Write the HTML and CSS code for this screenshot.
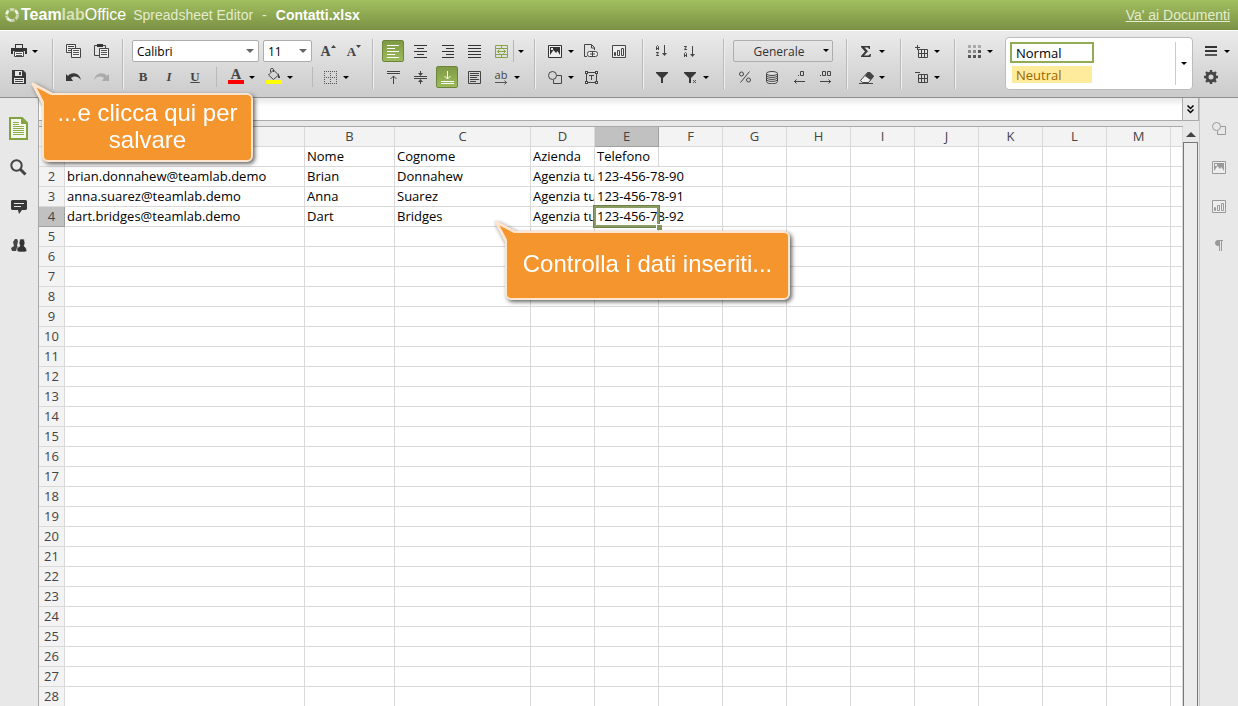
FILE: index.html
```html
<!DOCTYPE html>
<html lang="it">
<head>
    <meta charset="UTF-8">
    <meta name="viewport" content="width=device-width, initial-scale=1.0">
    <title>Contatti.xlsx - Spreadsheet Editor</title>
    <link rel="stylesheet" href="styles.css">
</head>

<body>
    <header class="header">
        <svg class="logo" width="16" height="16" viewBox="0 0 16 16"><circle cx="8" cy="8" r="5.5" fill="none" stroke="#fff" stroke-width="3" stroke-dasharray="4.6 1.16" opacity=".55"/><path d="M3.6 11.6A5.6 5.6 0 0 0 7 13.5M11 3.3a5.5 5.5 0 0 1 2.4 3.6M2.5 7A5.6 5.6 0 0 1 4 4" fill="none" stroke="#fff" stroke-width="2.4" opacity=".7"/></svg>
        <span class="brand"><b>Team</b><b class="lab">lab</b>Office</span>
        <span class="app">Spreadsheet Editor</span>
        <span class="dash">-</span>
        <h1 class="doc">Contatti.xlsx</h1>
        <a class="back" href="#">Va' ai Documenti</a>
    </header>

    <div class="toolbar">
        <div class="group g-file">
            <div class="row">
                <button class="tool" aria-label="Stampa"><svg width="16" height="14" viewBox="0 0 16 14"><path d="M4 0h8v1H4zM4 1h1v3H4zM11 1h1v3h-1zM0 4h16v6h-2V7H2v3H0z" fill="#333"/><path d="M3.500 7.500h9v5h-9z" fill="#f4f4f4" stroke="#444"/><path d="M5 9h6v1H5zM5 11h6v1H5z" fill="#555"/></svg></button>
                <button class="caret" aria-label="Opzioni di stampa"></button>
            </div>
            <div class="row">
                <button class="tool" aria-label="Salva"><svg width="14" height="14" viewBox="0 0 14 14"><path d="M0 0h11l3 3v11H0z" fill="#383838"/><path d="M3 1h7v5H3zM2 8h10v5H2z" fill="#e8e8e8"/><path d="M7 2h2v3H7zM3 9h8v1H3zM3 11h8v1H3z" fill="#444"/></svg></button>
            </div>
        </div>
        <div class="group g-clip">
            <div class="row">
                <button class="tool" aria-label="Copia"><svg width="15" height="14" viewBox="0 0 15 14"><path d="M.5.5h9v8h-9z" fill="#eee" stroke="#444"/><path d="M2 2h6v1H2zM2 4h3v1H2zM2 6h3v1H2z" fill="#444"/><path d="M5.500 4.500h9v9h-9z" fill="#eee" stroke="#444"/><path d="M7 6h6v1H7zM7 8h6v1H7zM7 10h6v1H7z" fill="#555"/></svg></button>
                <button class="tool" aria-label="Incolla"><svg width="15" height="14" viewBox="0 0 15 14"><path d="M.5 1.500h11v10H.5z" fill="#e4e4e4" stroke="#444"/><path d="M3 0h6v3H3z" fill="#333"/><path d="M5.500 4.500h9v9h-9z" fill="#eee" stroke="#444"/><path d="M7 6h6v1H7zM7 8h6v1H7zM7 10h6v1H7z" fill="#555"/></svg></button>
            </div>
            <div class="row">
                <button class="tool" aria-label="Annulla"><svg width="15" height="9" viewBox="0 0 15 9"><path d="M0 1l2 2C5-1 13-1 15 7 12 3 8 2.500 5 5l2 3H0z" fill="#383838"/></svg></button>
                <button class="tool" aria-label="Ripeti" disabled><svg width="15" height="9" viewBox="0 0 15 9"><path d="M15 1l-2 2C10-1 2-1 0 7 3 3 7 2.500 10 5L8 8h7z" fill="#aaa"/></svg></button>
            </div>
        </div>
        <div class="group g-font">
            <div class="row">
                <span class="combo combo-font"><select aria-label="Carattere"><option>Calibri</option></select></span>
                <span class="combo combo-size"><select aria-label="Dimensione carattere"><option>11</option></select></span>
                <button class="tool letter grow" aria-label="Aumenta dimensione">A<svg width="5" height="3" viewBox="0 0 5 3"><path d="M0 3h5L2.500 0z" fill="#444"/></svg></button>
                <button class="tool letter shrink" aria-label="Riduci dimensione">A<svg width="5" height="3" viewBox="0 0 5 3"><path d="M0 0h5L2.500 3z" fill="#444"/></svg></button>
            </div>
            <div class="row letters">
                <button class="tool letter">B</button>
                <button class="tool letter italic">I</button>
                <button class="tool letter under">U</button>
                <span class="split"></span>
                <button class="tool letter color" aria-label="Colore carattere">A<i class="bar red"></i></button>
                <button class="caret" aria-label="Altri colori"></button>
                <button class="tool color fill" aria-label="Colore sfondo"><svg width="14" height="12" viewBox="0 0 14 12"><path d="M3.500 4V1.500Q3.500.5 5 .5t1.500 1V4M1.500 7l5-5 5 5-5 4.500z" fill="none" stroke="#444"/><path d="M11 5l2 4v1h-2z" fill="#444"/></svg><i class="bar yellow"></i></button>
                <button class="caret" aria-label="Altri colori di sfondo"></button>
                <span class="split wide"></span>
                <button class="tool" aria-label="Bordi"><svg width="13" height="13" viewBox="0 0 13 13"><path d="M0 .5h13M0 6.500h13M0 12.500h13M.5 0v13M6.500 0v13M12.500 0v13" stroke="#555" stroke-dasharray="1 1"/></svg></button>
                <button class="caret" aria-label="Altri bordi"></button>
            </div>
        </div>
        <div class="group g-align">
            <div class="row">
                <button class="tool active" aria-label="Allinea a sinistra"><svg width="13" height="13" viewBox="0 0 13 13"><path d="M0 .5h12M0 3.500h8M0 6.500h12M0 9.500h8M0 12.500h12" stroke="#fff"/></svg></button>
                <button class="tool" aria-label="Allinea al centro"><svg width="13" height="13" viewBox="0 0 13 13"><path d="M0 .5h13M3 3.500h7M0 6.500h13M3 9.500h7M0 12.500h13" stroke="#333"/></svg></button>
                <button class="tool" aria-label="Allinea a destra"><svg width="13" height="13" viewBox="0 0 13 13"><path d="M1 .5h12M5 3.500h8M1 6.500h12M5 9.500h8M1 12.500h12" stroke="#333"/></svg></button>
                <button class="tool" aria-label="Giustifica"><svg width="13" height="13" viewBox="0 0 13 13"><path d="M0 .5h13M0 3.500h13M0 6.500h13M0 9.500h13M0 12.500h13" stroke="#333"/></svg></button>
                <button class="tool" aria-label="Unisci celle"><svg width="13" height="13" viewBox="0 0 13 13"><path d="M.5.5h12v12H.5zM0 3.500h13M0 9.500h13M6.500 0v3M6.500 10v3M2 6.500h9M4.500 4.500l-2 2 2 2M8.500 4.500l2 2-2 2" fill="none" stroke="#86a740"/></svg></button>
                <button class="caret ruled" aria-label="Opzioni unione"></button>
            </div>
            <div class="row">
                <button class="tool" aria-label="Allinea in alto"><svg width="13" height="13" viewBox="0 0 13 13"><path d="M0 .5h13M0 2.500h13M6.500 5v8M3.500 8l3-3 3 3" fill="none" stroke="#444"/></svg></button>
                <button class="tool" aria-label="Allinea in mezzo"><svg width="13" height="13" viewBox="0 0 13 13"><path d="M0 5.500h13M0 7.500h13M6.500 0v4M6.500 9v4" stroke="#444"/><path d="M4 2h5L6.500 5zM4 11h5L6.500 8z" fill="#444"/></svg></button>
                <button class="tool active" aria-label="Allinea in basso"><svg width="13" height="13" viewBox="0 0 13 13"><path d="M0 10.500h13M0 12.500h13M6.500 0v8M3.500 5l3 3 3-3" fill="none" stroke="#fff"/></svg></button>
                <button class="tool" aria-label="Testo a capo"><svg width="13" height="13" viewBox="0 0 13 13"><path d="M.5.5h12v12H.5zM2 2.500h9M2 4.500h9M2 6.500h7M2 8.500h9M2 10.500h6" fill="none" stroke="#444"/></svg></button>
                <button class="tool orient" aria-label="Orientamento">ab<svg width="13" height="5" viewBox="0 0 13 5"><path d="M0 2.500h12M9.500.5l2 2-2 2" fill="none" stroke="#555"/></svg></button>
                <button class="caret" aria-label="Altri orientamenti"></button>
            </div>
        </div>
        <div class="group g-insert">
            <div class="row">
                <button class="tool" aria-label="Immagine"><svg width="14" height="13" viewBox="0 0 14 13"><path d="M.5.5h13v12H.5z" fill="#eee" stroke="#333"/><path d="M2 2h10v8L9.500 6 8 8 5.500 5 2 10z" fill="#333"/><path d="M3 3h2v2H3z" fill="#eee"/></svg></button>
                <button class="caret" aria-label="Origine immagine"></button>
                <button class="tool" aria-label="Collegamento"><svg width="15" height="14" viewBox="0 0 15 14"><path d="M3 12.500H.5V.5h7l3 3V6M7.500 1v3h3" fill="none" stroke="#444"/><rect x="3.500" y="7.500" width="10" height="5" rx="2" fill="#eee" stroke="#444"/><path d="M6 10h5M8.500 7v6" stroke="#444"/></svg></button>
                <button class="tool" aria-label="Grafico"><svg width="14" height="13" viewBox="0 0 14 13"><path d="M.5.5h13v12H.5z" fill="#eee" stroke="#444"/><path d="M2.500 7.500h1v3h-1zM5.500 5.500h2v5h-2zM9.500 3.500h2v7h-2z" fill="none" stroke="#444"/></svg></button>
            </div>
            <div class="row">
                <button class="tool" aria-label="Forma"><svg width="14" height="13" viewBox="0 0 14 13"><path d="M9 4.500h4.500v8h-8V9" fill="none" stroke="#444"/><circle cx="4.500" cy="4.500" r="4" fill="none" stroke="#444"/></svg></button>
                <button class="caret" aria-label="Altre forme"></button>
                <button class="tool" aria-label="Casella di testo"><svg width="13" height="13" viewBox="0 0 13 13"><path d="M1.500 1.500h10v10h-10zM4 4.500h5M6.500 4v5" fill="none" stroke="#444"/><path d="M0 0h3v3H0zM10 0h3v3h-3zM0 10h3v3H0zM10 10h3v3h-3z" fill="#444"/><path d="M1 1h1v1H1zM11 1h1v1h-1zM1 11h1v1H1zM11 11h1v1h-1z" fill="#eee"/></svg></button>
            </div>
        </div>
        <div class="group g-sort">
            <div class="row">
                <button class="tool" aria-label="Ordina crescente"><svg width="12" height="12" viewBox="0 0 12 12"><path d="M.5 5V1.500L1.500.5l1 1V5M1 3.500h1M0 7.500h2.500L.5 10.500H3" fill="none" stroke="#444"/><path d="M8.500 0v10" stroke="#444"/><path d="M6 8h5l-2.500 3z" fill="#444"/></svg></button>
                <button class="tool" aria-label="Ordina decrescente"><svg width="12" height="12" viewBox="0 0 12 12"><path d="M0 1.500h2.500L.5 4.500H3M.5 12V8.500l1-1 1 1V12M1 10.500h1" fill="none" stroke="#444"/><path d="M8.500 1v10" stroke="#444"/><path d="M6 9h5l-2.500 3z" fill="#444"/></svg></button>
            </div>
            <div class="row">
                <button class="tool" aria-label="Filtro"><svg width="12" height="11" viewBox="0 0 12 11"><path d="M0 0h12v1L7 6v5H5V6L0 1z" fill="#383838"/></svg></button>
                <button class="tool" aria-label="Cancella filtro"><svg width="12" height="11" viewBox="0 0 12 11"><path d="M0 0h12v1L7 6v5H5V6L0 1z" fill="#383838"/><path d="M9 8l3 3M12 8l-3 3" stroke="#555"/></svg></button>
                <button class="caret" aria-label="Opzioni filtro"></button>
            </div>
        </div>
        <div class="group g-number">
            <div class="row">
                <span class="combo combo-format"><select aria-label="Formato numero"><option>Generale</option></select></span>
            </div>
            <div class="row">
                <button class="tool" aria-label="Percentuale"><svg width="12" height="12" viewBox="0 0 12 12"><path d="M10.500.5l-9 11" stroke="#444"/><circle cx="2.500" cy="3" r="2" fill="none" stroke="#444"/><circle cx="9.500" cy="9" r="2" fill="none" stroke="#444"/></svg></button>
                <button class="tool" aria-label="Valuta"><svg width="12" height="13" viewBox="0 0 12 13"><path d="M.5 2.500v8c0 3 11 3 11 0v-8" fill="#ddd" stroke="#444"/><ellipse cx="6" cy="2.500" rx="5.500" ry="2" fill="#ddd" stroke="#444"/><path d="M.5 4.500c0 2.500 11 2.500 11 0M.5 6.500c0 2.500 11 2.500 11 0M.5 8.500c0 2.500 11 2.500 11 0" fill="none" stroke="#444"/></svg></button>
                <button class="tool" aria-label="Diminuisci decimali"><svg width="12" height="14" viewBox="0 0 12 14"><path d="M7.500 1.500h3v4h-3zM5 5.500h1M1 11.500h11M3.500 9.500l-2 2 2 2" fill="none" stroke="#444"/></svg></button>
                <button class="tool" aria-label="Aumenta decimali"><svg width="12" height="14" viewBox="0 0 12 14"><path d="M2.500 1.500h3v4h-3zM7.500 1.500h3v4h-3zM0 5.500h1M0 11.500h11M8.500 9.500l2 2-2 2" fill="none" stroke="#444"/></svg></button>
            </div>
        </div>
        <div class="group g-edit">
            <div class="row">
                <button class="tool" aria-label="Somma"><svg width="10" height="11" viewBox="0 0 10 11"><path d="M0 0h9v3H8L7 1.500H3.500L7 5.200 3 9.500h4.500L9 8h1l-.5 3H0v-1l4-4.500L0 1z" fill="#383838"/></svg></button>
                <button class="caret" aria-label="Altre funzioni"></button>
            </div>
            <div class="row">
                <button class="tool" aria-label="Cancella"><svg width="15" height="13" viewBox="0 0 15 13"><path d="M1.500 9.500l7-8h2l4 4-5 6h-6z" fill="#eee" stroke="#444"/><path d="M6 5l3-4h2l4 4-3.500 4z" fill="#444"/><path d="M0 12.500h14" stroke="#444"/></svg></button>
                <button class="caret" aria-label="Opzioni cancella"></button>
            </div>
        </div>
        <div class="group g-cells">
            <div class="row">
                <button class="tool" aria-label="Inserisci celle"><svg width="13" height="13" viewBox="0 0 13 13"><path d="M3.500 4.500h9v8h-9zM3 8.500h10M6.500 4v9M9.500 4v9M0 2.500h5M2.500 0v5" fill="none" stroke="#444"/></svg></button>
                <button class="caret" aria-label="Opzioni inserimento"></button>
            </div>
            <div class="row">
                <button class="tool" aria-label="Elimina celle"><svg width="13" height="13" viewBox="0 0 13 13"><path d="M3.500 3.500h9v8h-9zM3 7.500h10M6.500 3v9M9.500 3v9M0 1.500h5" fill="none" stroke="#444"/></svg></button>
                <button class="caret" aria-label="Opzioni eliminazione"></button>
            </div>
        </div>
        <div class="group g-table">
            <div class="row">
                <button class="tool" aria-label="Modello tabella"><svg width="13" height="13" viewBox="0 0 13 13"><path d="M0 0h3v3H0zM5 0h3v3H5zM10 0h3v3h-3z" fill="#aaa"/><path d="M0 5h3v3H0zM5 5h3v3H5z" fill="#888"/><path d="M10 5h3v3h-3zM0 10h3v3H0zM5 10h3v3H5zM10 10h3v3h-3z" fill="#555"/></svg></button>
                <button class="caret" aria-label="Altri modelli"></button>
            </div>
        </div>
        <div class="styles">
            <div class="style-list">
                <button class="style normal">Normal</button>
                <button class="style neutral">Neutral</button>
            </div>
            <button class="caret more" aria-label="Altri stili"></button>
        </div>
        <div class="group g-view">
            <div class="row">
                <button class="tool" aria-label="Visualizza"><svg width="12" height="11" viewBox="0 0 12 11"><path d="M0 0h12v2H0zM0 4h12v2H0z" fill="#333"/><path d="M0 8h12v2H0z" fill="#555"/></svg></button>
                <button class="caret" aria-label="Opzioni visualizzazione"></button>
            </div>
            <div class="row">
                <button class="tool" aria-label="Impostazioni"><svg width="14" height="14" viewBox="0 0 14 14"><circle cx="7" cy="7" r="4" fill="none" stroke="#444" stroke-width="3"/><path d="M7 0v3M7 11v3M0 7h3M11 7h3M2 2l2 2M10 10l2 2M12 2l-2 2M4 10l-2 2" stroke="#444" stroke-width="2.400"/></svg></button>
            </div>
        </div>
    </div>

    <div class="main">
        <nav class="side left">
            <button aria-label="File"><svg width="19" height="23" viewBox="0 0 19 23"><path d="M1 1h12l5 5v16H1z" fill="#f6f8f0" stroke="#82a33f" stroke-width="2"/><path d="M12 1v6h6z" fill="#82a33f"/><path d="M4 5.500h6M4 7.500h6M4 9.500h11M4 11.500h11M4 13.500h11M4 15.500h11M4 17.500h11" stroke="#8faf4d"/></svg></button>
            <button aria-label="Cerca"><svg width="17" height="17" viewBox="0 0 17 17"><circle cx="6.500" cy="6.500" r="5.200" fill="none" stroke="#444" stroke-width="2"/><path d="M10 10l5.500 5.500" stroke="#444" stroke-width="3"/></svg></button>
            <button aria-label="Commenti"><svg width="16" height="14" viewBox="0 0 16 14"><path d="M1 0h14l1 1v8l-1 1h-4l-3 4-1-4H1L0 9V1z" fill="#383838"/><path d="M3 3.500h10M3 6.500h7" stroke="#e8e8e8"/></svg></button>
            <button aria-label="Chat"><svg width="16" height="13" viewBox="0 0 16 13"><path d="M1 12L0 9l3-2-1-4 2-3h2l1 2-1 5 1 1-2 4z" fill="#444"/><path d="M6 12V9l3-2-1-3 1-4h4l1 4-1 3 2 2 1 3-2 1H8z" fill="#333" stroke="#e8e8e8" stroke-width=".6"/></svg></button>
        </nav>
        <main class="sheet">
            <div class="formula">
                <input type="text" aria-label="Barra della formula">
                <button class="expand" aria-label="Espandi"><svg width="7" height="9" viewBox="0 0 7 9"><path d="M.5.500l3 3 3-3M.5 4.500l3 3 3-3" fill="none" stroke="#000" stroke-width="1.500"/></svg></button>
            </div>
            <div class="grid-wrap">
                <div class="grid">
                    <table>
                        <colgroup><col class="c-num"><col class="c-a"><col class="c-b"><col class="c-c"><col class="c" span="10"><col></colgroup>
                        <thead>
                            <tr><th></th><th></th><th>B</th><th>C</th><th>D</th><th class="on">E</th><th>F</th><th>G</th><th>H</th><th>I</th><th>J</th><th>K</th><th>L</th><th>M</th><th></th></tr>
                        </thead>
                        <tbody id="rows">
                            <tr><th></th><td></td><td>Nome</td><td>Cognome</td><td>Azienda</td><td>Telefono</td><td></td><td></td><td></td><td></td><td></td><td></td><td></td><td></td><td></td></tr>
                            <tr><th>2</th><td>brian.donnahew@teamlab.demo</td><td>Brian</td><td>Donnahew</td><td class="cut">Agenzia tu</td><td class="spill">123-456-78-90</td><td></td><td></td><td></td><td></td><td></td><td></td><td></td><td></td><td></td></tr>
                            <tr><th>3</th><td>anna.suarez@teamlab.demo</td><td>Anna</td><td>Suarez</td><td class="cut">Agenzia tu</td><td class="spill">123-456-78-91</td><td></td><td></td><td></td><td></td><td></td><td></td><td></td><td></td><td></td></tr>
                            <tr><th class="on">4</th><td>dart.bridges@teamlab.demo</td><td>Dart</td><td>Bridges</td><td class="cut">Agenzia tu</td><td class="spill selected">123-456-78-92</td><td></td><td></td><td></td><td></td><td></td><td></td><td></td><td></td><td></td></tr>
                        </tbody>
                    </table>
                </div>
                <div class="scroll">
                    <button class="up" aria-label="Scorri su"></button>
                    <div class="thumb"></div>
                </div>
            </div>
        </main>
        <nav class="side right">
            <button aria-label="Impostazioni forma"><svg width="14" height="13" viewBox="0 0 14 13"><path d="M9 4.500h4.500v8h-8V9" fill="none" stroke="#999"/><circle cx="4.500" cy="4.500" r="4" fill="none" stroke="#999"/></svg></button>
            <button aria-label="Impostazioni immagine"><svg width="14" height="13" viewBox="0 0 14 13"><path d="M.5.5h13v12H.5z" fill="#eee" stroke="#999"/><path d="M2 2h10v8L9.500 6 8 8 5.500 5 2 10z" fill="#999"/><path d="M3 3h2v2H3z" fill="#eee"/></svg></button>
            <button aria-label="Impostazioni grafico"><svg width="14" height="13" viewBox="0 0 14 13"><path d="M.5.5h13v12H.5z" fill="#eee" stroke="#999"/><path d="M2.500 7.500h1v3h-1zM5.500 5.500h2v5h-2zM9.500 3.500h2v7h-2z" fill="none" stroke="#999"/></svg></button>
            <button aria-label="Impostazioni paragrafo"><svg width="8" height="11" viewBox="0 0 8 11"><path d="M8 0H3C-1 0-1 6 3 6h1v5h1V1h1v10h1V1h1z" fill="#999"/></svg></button>
        </nav>
    </div>

    <div class="callout save">
        <svg class="tail" width="32" height="28" viewBox="0 0 32 28"><path d="M13 22L3 3l19 10" fill="#f4952d" stroke="#fde5cf" stroke-width="3" stroke-linejoin="round"/><path d="M14 20L8 8l14 7v8h-8z" fill="#f4952d"/></svg>
        <p>...e clicca qui per salvare</p>
    </div>
    <div class="callout check">
        <svg class="tail" width="32" height="28" viewBox="0 0 32 28"><path d="M13 22L3 3l19 10" fill="#f4952d" stroke="#fde5cf" stroke-width="3" stroke-linejoin="round"/><path d="M14 20L8 8l14 7v8h-8z" fill="#f4952d"/></svg>
        <p>Controlla i dati inseriti...</p>
    </div>

    <script src="script.js"></script>
</body>

</html>
```
FILE: styles.css
```css
*,
*::before,
*::after {
    box-sizing: border-box;
}
body {
    display: flex;
    flex-direction: column;
    height: 100vh;
    margin: 0;
    overflow: hidden;
    background: #e8e8e8;
    font-family: "Open Sans", "Noto Sans", sans-serif;
    font-size: 13px;
    color: #000;
}
button {
    padding: 0;
    border: none;
    background: none;
    font: inherit;
    color: inherit;
    cursor: pointer;
}
svg {
    display: block;
    flex: none;
}

/* header */
.header {
    display: flex;
    align-items: center;
    flex: none;
    height: 30px;
    padding: 0 8px 0 4px;
    background: linear-gradient(#a2bf5f, #7a9144);
    font-family: "Liberation Sans", Arial, sans-serif;
    font-size: 14px;
    color: #e3ecce;
}
.brand {
    margin-left: 1px;
    font-size: 16px;
    color: #fff;
}
.lab {
    color: #d6e2b9;
}
.app {
    margin-left: 7px;
}
.dash {
    margin: 0 9px;
}
.doc {
    margin: 0;
    font-size: 14px;
    color: #fff;
}
.back {
    margin-left: auto;
    color: #e3ecce;
}

/* toolbar */
.toolbar {
    display: flex;
    flex: none;
    height: 68px;
    padding-top: 8px;
    border-top: 1px solid #fff;
    border-bottom: 1px solid #8f8f8f;
    background: linear-gradient(#ebebeb, #cbcbcb);
}
.group {
    display: flex;
    flex-direction: column;
    flex: none;
    gap: 4px;
    height: 50px;
    padding-top: 1px;
    border-right: 1px solid #b9b9b9;
    box-shadow: 1px 0 #f0f0f0;
}
.row {
    display: flex;
    align-items: center;
    gap: 4px;
    height: 22px;
}
.tool {
    display: flex;
    align-items: center;
    justify-content: center;
    position: relative;
    width: 22px;
    height: 22px;
    margin: 0 1px;
}
.active {
    border: 1px solid #6d8539;
    border-radius: 2px;
    background: linear-gradient(#7f9a45, #9dbb5b);
}
.caret {
    width: 8px;
    height: 22px;
    margin-left: -4px;
}
.caret::after {
    content: "";
    display: block;
    margin: 0 auto;
    width: 6px;
    border: 3px solid transparent;
    border-top-color: #000;
    border-bottom: none;
}
.g-file {
    padding-left: 7px;
    padding-right: 13px;
}
.g-file .row {
    width: 32px;
}
.g-clip {
    padding-left: 8px;
    padding-right: 9px;
}
.g-font {
    padding-left: 9px;
    padding-right: 7px;
}
.g-align {
    padding-left: 8px;
    padding-right: 13px;
}
.g-align .row,
.g-number .row {
    gap: 3px;
}
.g-align .caret {
    margin-left: -3px;
}
.g-align .ruled {
    width: 12px;
    margin-right: -4px;
    padding-left: 2px;
    border-left: 1px solid #b5b5b5;
}
.g-insert {
    padding-left: 8px;
    padding-right: 11px;
}
.g-sort {
    padding-left: 7px;
    padding-right: 13px;
}
.g-number {
    padding-left: 9px;
    padding-right: 8px;
}
.g-edit {
    padding-left: 7px;
    padding-right: 14px;
}
.g-cells {
    padding-left: 8px;
    padding-right: 13px;
}
.g-table {
    padding-left: 7px;
    padding-right: 11px;
    border: none;
    box-shadow: none;
}
.g-view {
    padding-left: 6px;
    padding-right: 7px;
    border: none;
    box-shadow: none;
}

/* combo boxes */
.combo {
    position: relative;
}
.combo select {
    display: block;
    width: 100%;
    height: 22px;
    padding: 0 4px;
    border: 1px solid #adadad;
    border-radius: 2px;
    background: #fff;
    appearance: none;
    font-family: inherit;
    font-size: 12px;
    color: #000;
}
.combo::after {
    content: "";
    position: absolute;
    right: 5px;
    top: 9px;
    border: 4px solid transparent;
    border-top-color: #666;
    border-bottom: none;
    pointer-events: none;
}
.combo-font {
    width: 127px;
}
.combo-size {
    width: 49px;
}
.combo-format {
    width: 100px;
}
.combo-format select {
    padding: 0 22px 0 14px;
    background: none;
    text-align: center;
    color: #333;
}
.combo-format::after {
    right: 4px;
    border-width: 3px;
    border-bottom: none;
    border-top-color: #000;
}

/* letter buttons */
.letters {
    gap: 2px;
    margin-left: -1px;
}
.letters .caret {
    margin-left: -2px;
}
.letter {
    font-family: "Liberation Serif", serif;
    font-size: 13px;
    font-weight: bold;
    color: #444;
}
.grow,
.shrink {
    align-items: flex-start;
    width: 20px;
    line-height: 24px;
}
.grow {
    margin-left: 2px;
    font-size: 14px;
}
.grow svg,
.shrink svg {
    margin-top: 5px;
}
.italic {
    font-style: italic;
}
.under {
    text-decoration: underline;
}
.color {
    align-items: flex-start;
    line-height: 17px;
}
.letter.color {
    font-size: 15px;
}
.fill {
    margin-left: 5px;
    padding-top: 2px;
}
.bar {
    position: absolute;
    left: 3px;
    bottom: 4px;
    width: 16px;
    height: 4px;
}
.red {
    background: #f00;
}
.yellow {
    background: #ff0;
}
.split {
    width: 1px;
    height: 20px;
    margin: 0 5px 0 7px;
    background: #b9b9b9;
}
.wide {
    margin: 0 3px 0 16px;
}
.orient {
    flex-direction: column;
    font-size: 11px;
    line-height: 10px;
    color: #444;
}

/* cell styles */
.styles {
    display: flex;
    flex: 1;
    height: 53px;
    margin-top: -2px;
    padding: 4px 0;
    border: 1px solid #bcbcbc;
    border-radius: 4px;
    background: #fff;
}
.style-list {
    display: flex;
    flex-direction: column;
    gap: 1px;
    flex: 1;
    padding-left: 4px;
    border-right: 1px solid #ccc;
}
.style {
    width: 84px;
    height: 22px;
    padding: 0 4px;
    border: 2px solid transparent;
    background-clip: padding-box;
    text-align: left;
    line-height: 16px;
}
.normal {
    border-color: #92ab55;
}
.neutral {
    background-color: #ffeb9c;
    color: #9c6500;
}
.more {
    width: 16px;
    height: 43px;
    margin: 0;
}

/* side menus */
.main {
    display: flex;
    flex: 1;
    min-height: 0;
}
.side {
    display: flex;
    flex-direction: column;
    flex: none;
    width: 39px;
    padding-top: 11px;
}
.side button {
    display: flex;
    align-items: center;
    justify-content: center;
    height: 39px;
}
.left {
    padding-right: 1px;
    border-right: 1px solid #a9a9a9;
}
.right {
    border-left: 1px solid #c6c6c6;
}

/* sheet */
.sheet {
    display: flex;
    flex-direction: column;
    flex: 1;
    min-width: 0;
}
.formula {
    display: flex;
    flex: none;
    height: 23px;
    border-bottom: 1px solid #aaa;
}
.formula input {
    flex: 1;
    min-width: 0;
    padding: 0 4px;
    border: none;
    background: linear-gradient(#e6e6e6, #fff 8px);
    font: inherit;
    outline: none;
}
.expand {
    display: flex;
    align-items: center;
    justify-content: center;
    width: 17px;
    border: 1px solid #aaa;
    border-width: 0 1px;
}
.grid-wrap {
    display: flex;
    flex: 1;
    min-height: 0;
    margin-top: 5px;
}
.grid {
    flex: 1;
    min-width: 0;
    overflow: hidden;
    border-top: 1px solid #a9a9a9;
    background: #fff;
}
table {
    width: 100%;
    table-layout: fixed;
    border-spacing: 0;
}
.c-num {
    width: 26px;
}
.c-a {
    width: 240px;
}
.c-b {
    width: 90px;
}
.c-c {
    width: 136px;
}
.c {
    width: 64px;
}
th,
td {
    height: 20px;
    padding: 0 2px;
    border: 1px solid #d9d9d9;
    border-width: 0 1px 1px 0;
    line-height: 19px;
    white-space: nowrap;
}
th {
    padding: 0;
    background: #f3f3f3;
    font-weight: normal;
    color: #444;
}
.on {
    background: #c1c1c1;
    border-color: #a0a0a0;
}
.cut {
    overflow: hidden;
}
.spill {
    position: relative;
    border-right-color: transparent;
}
.selected::before {
    content: "";
    position: absolute;
    left: -2px;
    top: -2px;
    width: 67px;
    height: 23px;
    border: 3px solid #8a9b62;
    outline: 1px solid #6f8148;
    outline-offset: -1px;
}
.selected::after {
    content: "";
    position: absolute;
    left: 61px;
    top: 17px;
    width: 6px;
    height: 6px;
    border: 1px solid #fff;
    border-width: 1px 0 0 1px;
    background: #83975a;
}
.scroll {
    display: flex;
    flex-direction: column;
    width: 16px;
}
.up {
    height: 16px;
}
.up::after {
    content: "";
    display: block;
    width: 10px;
    margin: 0 auto;
    border: 5px solid transparent;
    border-top: none;
    border-bottom-color: #444;
}
.thumb {
    flex: 1;
    width: 15px;
    border: 1px solid #777;
    border-bottom: none;
    background: #ececec;
}

/* hints */
.callout {
    position: absolute;
    display: flex;
    align-items: center;
    justify-content: center;
    height: 69px;
    padding-bottom: 4px;
    border: 2px solid #fde5cf;
    border-radius: 6px;
    background: #f4952d;
    filter: drop-shadow(2px 2px 2px rgba(0, 0, 0, .6));
    font-family: "Liberation Sans", Arial, sans-serif;
    font-size: 24px;
    line-height: 27px;
    text-align: center;
    color: #fff;
}
.callout p {
    margin: 0;
}
.tail {
    position: absolute;
    left: -14px;
    top: -14px;
}
.save {
    left: 42px;
    top: 93px;
    width: 211px;
}
.check {
    left: 505px;
    top: 231px;
    width: 285px;
}
```
FILE: script.js
```js
// righe vuote sotto i dati
let rows = document.getElementById('rows')
for (let i = 5; i <= 28; i++) {
    let tr = document.createElement('tr')
    tr.innerHTML = '<th>' + i + '</th>' + '<td></td>'.repeat(14)
    rows.appendChild(tr)
}
```
